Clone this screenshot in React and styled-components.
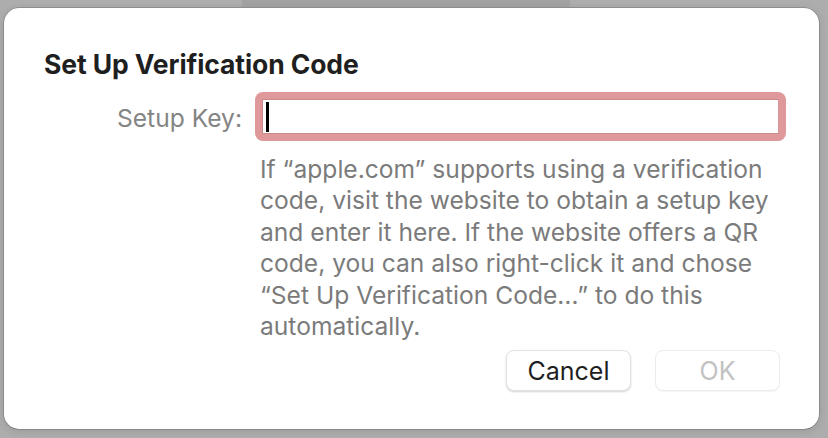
import React from "react";
import styled, { createGlobalStyle } from "styled-components";

const Global = createGlobalStyle`
  html, body { margin: 0; padding: 0; }
  body {
    width: 828px;
    height: 438px;
    overflow: hidden;
    background:
      linear-gradient(#a2a2a2, #a2a2a2) 242px 0 / 328px 7px no-repeat,
      #adadad;
    font-family: Inter, "Noto Sans", "Liberation Sans", sans-serif;
    -webkit-font-smoothing: antialiased;
  }
`;

const Page = styled.div`
  width: 828px;
  height: 438px;
  box-sizing: border-box;
  padding: 8px 9px 9px 4px;
  display: flex;
`;

const Dialog = styled.div`
  flex: 1;
  background: #ffffff;
  border-radius: 15px;
  box-shadow: 0 0 0 0.5px rgba(0, 0, 0, 0.3), 0 2px 8px rgba(0, 0, 0, 0.12);
  box-sizing: border-box;
  padding: 41px 39px 0 40px;
  display: flex;
  flex-direction: column;
`;

const Title = styled.h1`
  margin: 0;
  font-size: 26.5px;
  line-height: 30px;
  font-weight: 700;
  color: #1f1f1f;
  letter-spacing: -0.1px;
`;

const Form = styled.div`
  margin-top: 13px;
  display: grid;
  grid-template-columns: 208px 1fr;
  column-gap: 3px;
  row-gap: 13px;
`;

const Label = styled.label`
  justify-self: end;
  align-self: center;
  font-size: 24.6px;
  color: #848484;
  padding-top: 2px;
  padding-right: 10px;
`;

const Field = styled.div`
  height: 49px;
  margin-right: -6px;
  box-sizing: border-box;
  border-radius: 8px;
  background: #e0999b;
  padding: 7px;
  display: flex;
`;

const Inner = styled.div`
  flex: 1;
  background: #fff;
  border: 1px solid #c98a8c;
  border-right-color: #d9979a;
  display: flex;
  align-items: center;
  padding-left: 3px;
`;

const Caret = styled.span`
  width: 3px;
  height: 30px;
  background: #000;
`;

const Help = styled.p`
  grid-column: 2;
  margin: 0;
  padding-left: 5px;
  font-size: 24.6px;
  line-height: 31.4px;
  color: #7b7b7b;
  white-space: nowrap;
`;

const Buttons = styled.div`
  margin-top: 8px;
  display: flex;
  justify-content: flex-end;
  gap: 24px;
`;

const Button = styled.button`
  width: 125px;
  height: 41px;
  border-radius: 8px;
  font-family: inherit;
  font-size: 25px;
  background: #fff;
  color: ${(p) => (p.disabled ? "#c2c2c2" : "#1f1f1f")};
  border: 1px solid ${(p) => (p.disabled ? "#ececec" : "#e2e2e2")};
  box-shadow: ${(p) =>
    p.disabled ? "0 1px 1px rgba(0,0,0,0.04)" : "0 1px 2px rgba(0,0,0,0.18)"};
  padding: 0;
  cursor: default;
`;

export default function App() {
  return (
    <>
      <Global />
      <Page>
        <Dialog>
          <Title>Set Up Verification Code</Title>
          <Form>
            <Label>Setup Key:</Label>
            <Field>
              <Inner>
                <Caret />
              </Inner>
            </Field>
            <Help>
              If “apple.com” supports using a verification
              <br />
              code, visit the website to obtain a setup key
              <br />
              and enter it here. If the website offers a QR
              <br />
              code, you can also right-click it and chose
              <br />
              “Set Up Verification Code…” to do this
              <br />
              automatically.
            </Help>
          </Form>
          <Buttons>
            <Button>Cancel</Button>
            <Button disabled>OK</Button>
          </Buttons>
        </Dialog>
      </Page>
    </>
  );
}
